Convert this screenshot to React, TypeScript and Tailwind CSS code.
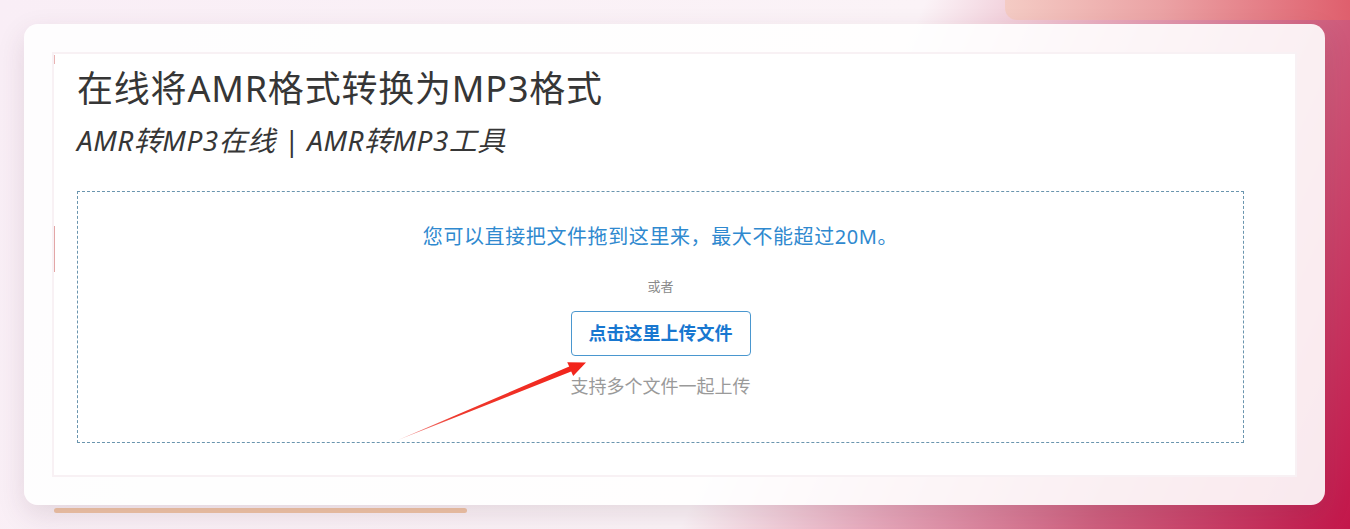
import React from "react";

export default function App() {
  return (
    <div className="relative w-[1350px] h-[529px] overflow-hidden bg-[linear-gradient(115deg,#f9eef6_0%,#fbf3f7_58%,#e8aabd_70%,#cf5f7e_84%,#c3164a_100%)] pt-6 px-6 font-['Noto_Sans','Noto_Sans_CJK_SC',sans-serif]">
      {/* top-right decorative tab */}
      <div className="absolute left-[1005px] top-0 w-[345px] h-[20px] rounded-bl-[12px] bg-[linear-gradient(90deg,#f4cbc4_0%,#eba3a5_45%,#df5f6d_100%)]" />

      {/* card */}
      <div className="relative w-[1301px] h-[481px] rounded-[14px] bg-white/90 shadow-[0_10px_28px_rgba(80,40,60,0.13)] p-7">
        <div className="relative h-full border-2 border-[#f8f1f4] bg-white pl-[23px] pt-[13px]">
          <span className="absolute left-0 top-[1px] w-px h-[9px] bg-[#e9b3b3]" />
          <span className="absolute left-0 top-[172px] w-px h-[46px] bg-[#e3a6a6]" />
          <h1 className="text-[36px] leading-[43px] text-[#363636] font-normal tracking-[0.8px]">
            在线将AMR格式转换为MP3格式
          </h1>
          <h2 className="mt-[13px] text-[28px] leading-[34px] italic text-[#363636] font-normal tracking-[0.5px]">
            AMR转MP3在线 | AMR转MP3工具
          </h2>
          <div className="mt-[34px] w-[1167px] h-[252px] border border-dashed border-[#6a95ae] flex flex-col items-center">
            <p className="mt-[30px] text-[20px] leading-[30px] text-[#2f89cf] tracking-[0.6px]">
              您可以直接把文件拖到这里来，最大不能超过20M。
            </p>
            <p className="mt-[24px] text-[13px] leading-[20px] text-[#8a8a8a]">或者</p>
            <button className="mt-[15px] w-[180px] h-[45px] rounded-[4px] border border-[#4a97cf] bg-white text-[18px] font-bold text-[#1877d0]">
              点击这里上传文件
            </button>
            <p className="mt-[17px] text-[18px] leading-[26px] text-[#9a9a9a]">支持多个文件一起上传</p>
          </div>
        </div>
      </div>

      {/* bottom orange bar */}
      <div className="ml-[30px] mt-[3px] w-[413px] h-[5px] rounded-full bg-[#efc4a6]" />

      {/* red arrow overlay */}
      <svg className="pointer-events-none absolute left-0 top-0" width="1350" height="529" viewBox="0 0 1350 529">
        <defs>
          <linearGradient id="arr" x1="398" y1="440" x2="585" y2="363" gradientUnits="userSpaceOnUse">
            <stop offset="0" stopColor="#f3a0a0" />
            <stop offset="0.3" stopColor="#ee3a2e" />
            <stop offset="1" stopColor="#f2231a" />
          </linearGradient>
        </defs>
        <polygon
          points="398,440 569.2,366.6 567.2,362.2 586,362.5 573.2,376 571.2,371.6"
          fill="url(#arr)"
        />
      </svg>
    </div>
  );
}
